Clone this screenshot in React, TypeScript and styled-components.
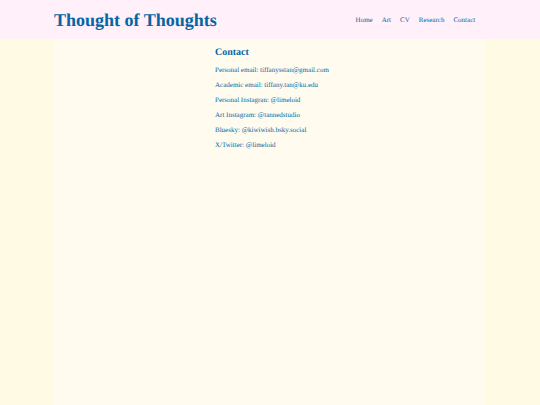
import React from "react";
import styled, { createGlobalStyle } from "styled-components";

const GlobalStyle = createGlobalStyle`
  * { box-sizing: border-box; }
  body {
    margin: 0;
    background: #fffae3;
    color: #0466a4;
    font-family: "Liberation Serif", "Times New Roman", serif;
    font-size: 7px;
    line-height: 8px;
    text-rendering: geometricPrecision;
  }
`;

const Page = styled.div`
  display: flex;
  flex-direction: column;
  min-height: 100vh;
`;

const Header = styled.header`
  display: flex;
  align-items: center;
  justify-content: space-between;
  padding: 9px 12% 8px 10%;
  background: #fff0f9;
`;

const SiteTitle = styled.h1`
  margin: 0;
  font-size: 18px;
  line-height: 22px;
  white-space: nowrap;
`;

const NavList = styled.ul`
  display: flex;
  gap: 9px;
  margin: 0;
  padding: 0;
  list-style: none;
`;

const NavLink = styled.a`
  color: inherit;
  text-decoration: none;
`;

const Main = styled.main`
  flex: 1;
  width: 80%;
  margin: 0 auto;
  padding: 8px 0;
  display: flex;
  justify-content: center;
  background: #fffcef;
`;

const ContactSection = styled.section`
  display: flex;
  flex-direction: column;
  gap: 7px;
  width: 110px;
  white-space: nowrap;
`;

const SectionTitle = styled.h2`
  margin: 0;
  font-size: 10px;
  line-height: 12px;
`;

const Line = styled.p`
  margin: 0;
`;

const pages = ["Home", "Art", "CV", "Research", "Contact"];

const contacts = [
  "Personal email: tiffanysstan@gmail.com",
  "Academic email: tiffany.tan@ku.edu",
  "Personal Instagran: @limeloid",
  "Art Instagram: @tannedstudio",
  "Bluesky: @kiwiwish.bsky.social",
  "X/Twitter: @limeloid",
];

export default function App() {
  return (
    <Page>
      <GlobalStyle />
      <Header>
        <SiteTitle>Thought of Thoughts</SiteTitle>
        <nav>
          <NavList>
            {pages.map((page) => (
              <li key={page}>
                <NavLink href={`#${page.toLowerCase()}`}>{page}</NavLink>
              </li>
            ))}
          </NavList>
        </nav>
      </Header>
      <Main>
        <ContactSection>
          <SectionTitle>Contact</SectionTitle>
          {contacts.map((text) => (
            <Line key={text}>{text}</Line>
          ))}
        </ContactSection>
      </Main>
    </Page>
  );
}
